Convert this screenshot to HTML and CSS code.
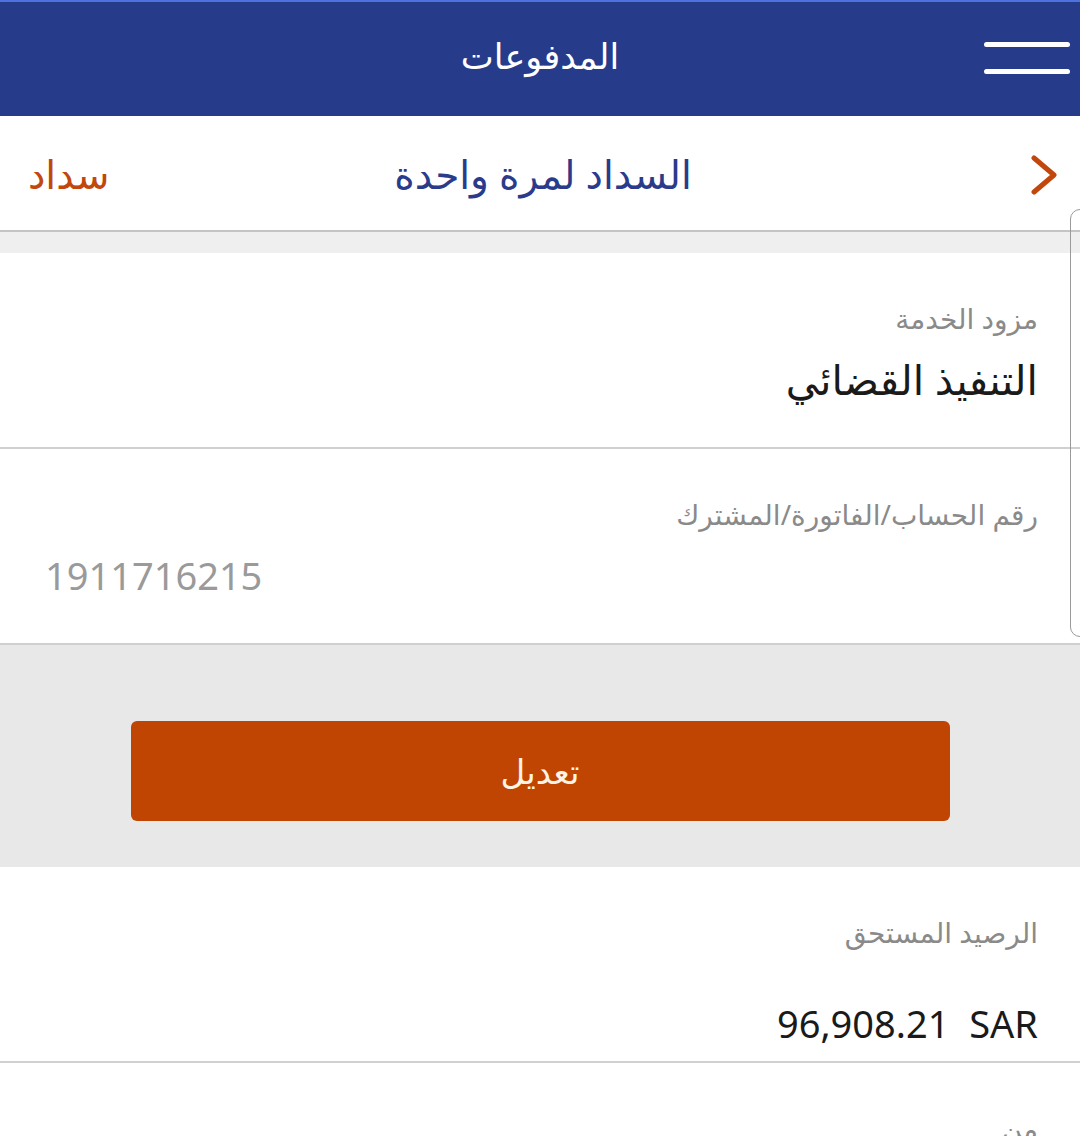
FILE: index.html
```html
<!DOCTYPE html>
<html lang="ar" dir="rtl">
<head>
    <meta charset="UTF-8">
    <meta name="viewport" content="width=device-width, initial-scale=1.0">
    <title>المدفوعات</title>
    <link rel="stylesheet" href="styles.css">
</head>
<body>
    <header class="topbar">
        <div class="menu-btn">
            <span></span>
            <span></span>
        </div>
        <h1>المدفوعات</h1>
    </header>

    <nav class="subbar">
        <div class="back">
            <svg width="28" height="40" viewBox="0 0 28 40"><path d="M4 3 L24 20 L4 37" fill="none" stroke="#c2470c" stroke-width="5" stroke-linecap="round" stroke-linejoin="round"/></svg>
        </div>
        <h2>السداد لمرة واحدة</h2>
        <div class="brand">سداد</div>
    </nav>

    <div class="gap-band"></div>

    <section class="card">
        <div class="field">
            <div class="label">مزود الخدمة</div>
            <div class="value">التنفيذ القضائي</div>
        </div>
        <div class="field">
            <div class="label">رقم الحساب/الفاتورة/المشترك</div>
            <div class="value num ltr muted">1911716215</div>
        </div>
        <div class="side-frame"></div>
    </section>

    <div class="action-band">
        <button class="edit-btn">تعديل</button>
    </div>

    <section class="card">
        <div class="field">
            <div class="label">الرصيد المستحق</div>
            <div class="value num amount">96,908.21&nbsp;&nbsp;SAR</div>
        </div>
        <div class="field">
            <div class="label">من</div>
        </div>
    </section>
</body>
</html>
```

FILE: styles.css
```css
* {
    box-sizing: border-box;
}
body {
    margin: 0;
    background-color: #ffffff;
    font-family: "Noto Sans", "DejaVu Sans", sans-serif;
    overflow: hidden;
}
.topbar {
    height: 116px;
    background-color: #263c8b;
    border-top: 2px solid #4d72e0;
    display: flex;
    align-items: center;
    justify-content: center;
    position: relative;
    padding-bottom: 8px;
}
.topbar h1 {
    margin: 0;
    color: #ffffff;
    font-size: 35px;
    font-weight: normal;
}
.menu-btn {
    position: absolute;
    right: 10px;
    top: 40px;
    width: 86px;
    display: flex;
    flex-direction: column;
    gap: 22px;
}
.menu-btn span {
    display: block;
    height: 5px;
    border-radius: 3px;
    background-color: #ffffff;
}
.subbar {
    height: 116px;
    border-bottom: 2px solid #c4c4c4;
    display: grid;
    grid-template-columns: 1fr auto 1fr;
    align-items: center;
    padding: 0 22px 0 28px;
}
.subbar h2 {
    margin: 0;
    color: #2b3b8c;
    font-size: 39px;
    font-weight: normal;
}
.back {
    display: flex;
    padding-top: 4px;
}
.brand {
    justify-self: end;
    color: #c2470c;
    font-size: 39px;
}
.gap-band {
    height: 21px;
    background-color: #efefef;
}
.card {
    background-color: #ffffff;
    position: relative;
}
.field {
    padding: 46px 42px 30px;
    border-bottom: 2px solid #d0d0d0;
    height: 196px;
}
.label {
    color: #8a8a8a;
    font-size: 28px;
    line-height: 38px;
}
.value {
    color: #1a1a1a;
    font-size: 41px;
    line-height: 52px;
    margin-top: 16px;
}
.value.num {
    font-size: 38px;
}
.value.ltr {
    direction: ltr;
    text-align: left;
    padding-left: 3px;
}
.value.muted {
    color: #9a9a9a;
}
.side-frame {
    position: absolute;
    right: -40px;
    top: -44px;
    width: 50px;
    height: 428px;
    border: 1.5px solid #9a9a9a;
    border-radius: 10px;
}
.action-band {
    height: 222px;
    background-color: #e8e8e8;
    display: flex;
    align-items: flex-start;
    justify-content: center;
    padding-top: 76px;
}
.edit-btn {
    width: 819px;
    height: 100px;
    border: none;
    border-radius: 6px;
    background-color: #c14502;
    color: #fdf3e6;
    font-family: inherit;
    font-size: 34px;
}
.amount {
    direction: ltr;
    text-align: right;
    margin-top: 46px;
}
```
